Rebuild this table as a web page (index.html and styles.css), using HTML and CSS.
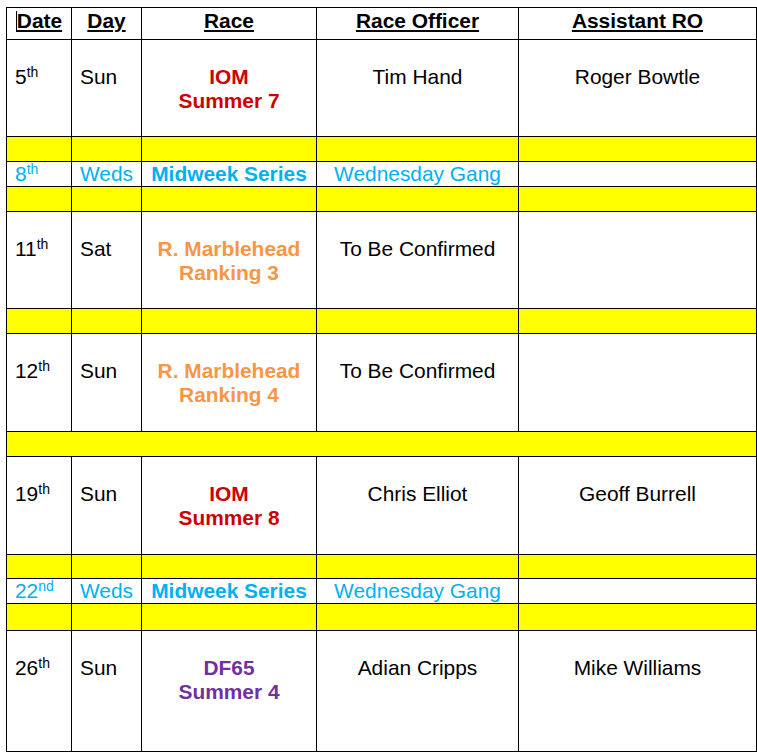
FILE: index.html
```html
<!DOCTYPE html>
<html lang="en">
<head>
<meta charset="utf-8">
<title>Race Schedule</title>
<link rel="stylesheet" href="styles.css">
</head>
<body>
<table class="schedule">
  <colgroup>
    <col class="c-date"><col class="c-day"><col class="c-race"><col class="c-ro"><col class="c-aro">
  </colgroup>
  <thead>
    <tr class="head">
      <th><span class="caret"></span>Date</th>
      <th>Day</th>
      <th>Race</th>
      <th>Race Officer</th>
      <th>Assistant RO</th>
    </tr>
  </thead>
  <tbody>
    <tr class="big h97">
      <td class="left">5<sup>th</sup></td>
      <td class="left">Sun</td>
      <td class="race red">IOM<br>Summer 7</td>
      <td>Tim Hand</td>
      <td>Roger Bowtle</td>
    </tr>
    <tr class="gap"><td></td><td></td><td></td><td></td><td></td></tr>
    <tr class="thin blue">
      <td class="left">8<sup>th</sup></td>
      <td class="left">Weds</td>
      <td class="race">Midweek Series</td>
      <td>Wednesday Gang</td>
      <td></td>
    </tr>
    <tr class="gap"><td></td><td></td><td></td><td></td><td></td></tr>
    <tr class="big h97">
      <td class="left">11<sup>th</sup></td>
      <td class="left">Sat</td>
      <td class="race orange">R. Marblehead<br>Ranking 3</td>
      <td>To Be Confirmed</td>
      <td></td>
    </tr>
    <tr class="gap"><td></td><td></td><td></td><td></td><td></td></tr>
    <tr class="big h98">
      <td class="left">12<sup>th</sup></td>
      <td class="left">Sun</td>
      <td class="race orange">R. Marblehead<br>Ranking 4</td>
      <td>To Be Confirmed</td>
      <td></td>
    </tr>
    <tr class="gap"><td colspan="5"></td></tr>
    <tr class="big h98">
      <td class="left">19<sup>th</sup></td>
      <td class="left">Sun</td>
      <td class="race red">IOM<br>Summer 8</td>
      <td>Chris Elliot</td>
      <td>Geoff Burrell</td>
    </tr>
    <tr class="gap g24"><td></td><td></td><td></td><td></td><td></td></tr>
    <tr class="thin blue">
      <td class="left">22<sup>nd</sup></td>
      <td class="left">Weds</td>
      <td class="race">Midweek Series</td>
      <td>Wednesday Gang</td>
      <td></td>
    </tr>
    <tr class="gap g27"><td></td><td></td><td></td><td></td><td></td></tr>
    <tr class="big h121">
      <td class="left">26<sup>th</sup></td>
      <td class="left">Sun</td>
      <td class="race purple">DF65<br>Summer 4</td>
      <td>Adian Cripps</td>
      <td>Mike Williams</td>
    </tr>
  </tbody>
</table>
</body>
</html>
```
FILE: styles.css
```css
html, body {
  margin: 0;
  padding: 0;
  background: #ffffff;
}
body {
  font-family: "Liberation Sans", Arial, sans-serif;
  font-size: 20.9px;
  line-height: 24px;
  color: #000000;
}
.schedule {
  margin: 7px 0 0 6px;
  border-collapse: collapse;
  table-layout: fixed;
  width: 750px;
}
.c-date { width: 65px; }
.c-day { width: 70px; }
.c-race { width: 175px; }
.c-ro { width: 202px; }
.c-aro { width: 238px; }

.schedule th,
.schedule td {
  border: 1px solid #000000;
  padding: 0;
  text-align: center;
  vertical-align: top;
  white-space: nowrap;
  overflow: visible;
}
.head th {
  height: 32px;
  box-sizing: border-box;
  padding-top: 1px;
  font-weight: bold;
  text-decoration: underline;
  text-underline-offset: 2px;
}
.caret {
  display: inline-block;
  width: 1px;
  height: 21px;
  background: #000000;
  vertical-align: -4px;
}
.schedule td.left {
  text-align: left;
  padding-left: 8px;
}
.big td {
  padding-top: 25px;
  box-sizing: border-box;
}
.big td.left { padding-left: 8px; }
.h97 td { height: 97px; }
.h98 td { height: 98px; }
.h121 td { height: 121px; }

.gap td {
  background: #ffff00;
  height: 25px;
  box-sizing: border-box;
}
.gap.g24 td { height: 24px; }
.gap.g27 td { height: 27px; }

.thin td {
  height: 25px;
  box-sizing: border-box;
}
.race { font-weight: bold; }
.red { color: #cc0000; }
.orange { color: #f79646; }
.purple { color: #7030a0; }
.blue td { color: #00b0f0; }

sup {
  font-size: 14px;
  line-height: 0;
  vertical-align: 7px;
}
```
